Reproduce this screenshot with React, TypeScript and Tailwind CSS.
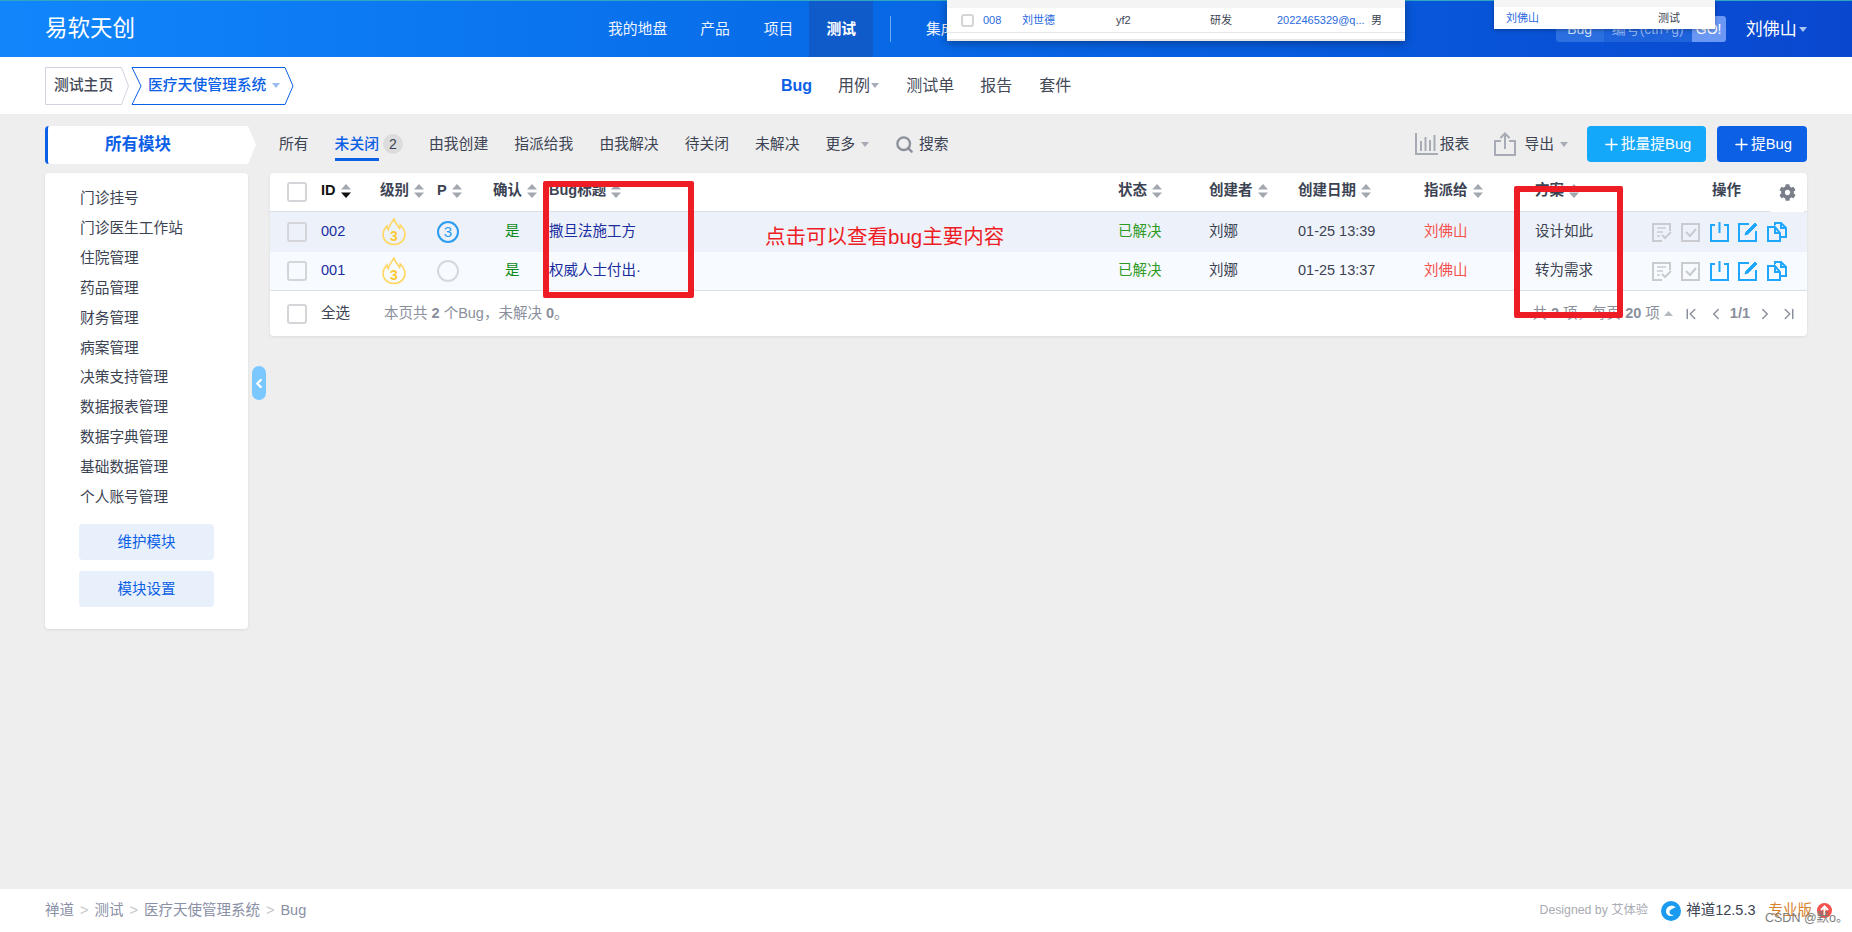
import React from 'react';
import { ChevronFirst, ChevronLast, ChevronLeft, ChevronRight, Plus, Search } from 'lucide-react';
import { FaCog } from 'react-icons/fa';

const cols = 'grid grid-cols-[51px_59px_57px_56px_56px_569px_91px_89px_126px_111px_117px_155px] items-center';

const Caret = ({ className = 'fill-[#a6abb5]' }: { className?: string }) => (
  <svg width="8" height="5" viewBox="0 0 8 5" className={`ml-[6px] inline-block ${className}`}><path d="M0 0h8L4 5z" /></svg>
);

const Sort = ({ active }: { active?: boolean }) => (
  <svg width="10" height="14" viewBox="0 0 10 14" className="ml-[5px] shrink-0">
    <path d="M5 0l5 5.5H0z" fill="#a3a7b0" />
    <path d="M5 14L0 8.5h10z" fill={active ? '#111' : '#a3a7b0'} />
  </svg>
);

const Check = ({ size = 'w-[20px] h-[20px]' }: { size?: string }) => (
  <span className={`block ${size} border-2 border-[#d3d5d8] rounded-[3px] bg-transparent`} />
);

const Flame = () => (
  <svg width="24" height="28" viewBox="0 0 24 28">
    <path d="M12 1C12.800 5.500 16 7 17.600 10.500c.6-1 .8-2 .7-3.500 2.500 2.500 4.700 6 4.700 9.500 0 5.800-4.800 10-11 10S1 22.300 1 16.500c0-3.500 2-6.500 4-8.500 0 1.500.3 2.700 1.200 3.800C7 8 9.500 5 12 1z" fill="none" stroke="#ffd65c" strokeWidth="1.500" />
    <text x="12" y="23" textAnchor="middle" fontSize="14" fontWeight="700" fill="#fcc934" fontFamily="Liberation Sans">3</text>
  </svg>
);

const Actions = () => {
  const g = '#c9cbcf';
  const b = '#1ea7fd';
  return (
    <div className="flex items-center gap-[9px]">
      <svg width="20" height="20" viewBox="0 0 20 20" fill="none" stroke={g} strokeWidth="2"><path d="M18 9V2H1v17h9" /><path d="M5 6h9M5 10h6M5 14h3" strokeWidth="1.300" /><path d="M10 13l3 3 6-6" /></svg>
      <svg width="19" height="19" viewBox="0 0 19 19" fill="none" stroke={g} strokeWidth="2"><path d="M1 1h17v17H1z" /><path d="M5 9l4 4 6-7" /></svg>
      <svg width="19" height="20" viewBox="0 0 19 20" fill="none" stroke={b} strokeWidth="2" className="ml-[1px]"><path d="M5 3H1v16h17V3h-4" /><path d="M9.500 0v11" /></svg>
      <svg width="20" height="20" viewBox="0 0 20 20" fill="none" stroke={b} strokeWidth="2"><path d="M11 2H1v17h17V9" /><path d="M7 13l1-3 9-9 2 2-9 9z" fill={b} strokeWidth="1" /></svg>
      <svg width="20" height="20" viewBox="0 0 20 20" fill="none" stroke={b} strokeWidth="2"><path d="M8 5H1v14h12v-8L8 5v6h5" /><path d="M8 3V1h6l5 5v9h-5M14 1v5h5" /></svg>
    </div>
  );
};

const rows = [
  { id: '002', p: true, title: '撒旦法施工方', date: '01-25 13:39', plan: '设计如此', bg: 'bg-[#edf2fa]' },
  { id: '001', p: false, title: '权威人士付出·', date: '01-25 13:37', plan: '转为需求', bg: 'bg-[#f7fafe]' },
];

const heads: [string, string][] = [
  ['ID', ''], ['级别', ''], ['P', ''], ['确认', ''], ['Bug标题', ''],
];

const modules = ['门诊挂号', '门诊医生工作站', '住院管理', '药品管理', '财务管理', '病案管理', '决策支持管理', '数据报表管理', '数据字典管理', '基础数据管理', '个人账号管理'];

export default function App() {
  return (
    <div className="relative flex h-[932px] w-[1852px] flex-col overflow-hidden bg-[#eeeeee] font-['Liberation_Sans','Noto_Sans_CJK_SC',sans-serif] text-[14.5px] text-[#3c4353]">
      {/* Top bar */}
      <header className="flex h-[57px] shrink-0 items-center border-t border-t-[#2fa6c4] bg-gradient-to-r from-[#1186fb] to-[#0a47cf] pl-[45px] text-white">
        <div className="w-[546px] text-[22.5px] leading-none">易软天创</div>
        <nav className="flex h-full items-center text-[14.8px] text-[#eef4ff]">
          <span className="px-[17px]">我的地盘</span>
          <span className="px-[16px]">产品</span>
          <span className="pl-[18px] pr-[16px]">项目</span>
          <span className="flex h-full items-center bg-[#0f5bc9] pl-[17px] pr-[17px] font-bold text-white">测试</span>
          <span className="ml-[17px] h-[26px] w-px bg-[#6ea8f2]" />
          <span className="ml-[35px]">集成</span>
        </nav>
        <div className="ml-[600px] flex h-[26px] items-center text-[14px] text-[#cfe0fb]">
          <span className="flex h-full w-[48px] items-center justify-center rounded-l-[3px] bg-[#2b6fe0]">Bug</span>
          <span className="flex h-full w-[88px] items-center justify-center bg-[#1e62dc] text-[#8fb4f2]">编号(ctrl+g)</span>
          <span className="flex h-full w-[34px] items-center justify-center rounded-r-[3px] bg-[#6b98f5] text-white">GO!</span>
        </div>
        <span className="ml-[20px] text-[17px] leading-none">刘佛山</span>
        <Caret className="!ml-[2px] fill-[#a9c6f5]" />
      </header>

      {/* Second bar */}
      <div className="flex h-[57px] shrink-0 items-center bg-white pl-[45px]">
        <div className="relative flex h-[38px] w-[84px] items-center pl-[9px] font-medium text-[#444a58]">
          <svg width="84" height="38" viewBox="0 0 84 38" className="absolute left-0 top-0"><path d="M.5.5h76l7 18.500-7 18.500H.5z" fill="#fff" stroke="#d0d5e0" /></svg>
          <span className="relative text-[14.8px]">测试主页</span>
        </div>
        <div className="relative ml-[2px] flex h-[38px] w-[163px] items-center pl-[17px] font-medium text-[#0b60e6]">
          <svg width="163" height="38" viewBox="0 0 163 38" className="absolute left-0 top-0"><path d="M1 .5h153l8 18.500-8 18.500H1l9-18.500z" fill="#fff" stroke="#0b60e6" /></svg>
          <span className="relative text-[14.8px]">医疗天使管理系统</span>
          <Caret className="relative fill-[#9bbdf2]" />
        </div>
        <div className="ml-[487px] flex items-center text-[16px] text-[#444a58]">
          <span className="font-bold text-[#0b60e6]">Bug</span>
          <span className="ml-[26px]">用例</span><Caret className="fill-[#a6abb5] !ml-[1px]" />
          <span className="ml-[27px]">测试单</span>
          <span className="ml-[26px]">报告</span>
          <span className="ml-[27px]">套件</span>
        </div>
      </div>

      {/* Main */}
      <main className="relative flex-1 px-[45px] pt-[12px]">
        <div className="flex h-[38px] items-center text-[14.8px] text-[#3c4353]">
          <div className="flex h-full w-[211px] items-center justify-center rounded-l-[4px] border-l-[3px] border-l-[#0b60e6] bg-white pb-[2px] pr-[28px] text-[16.500px] font-semibold text-[#0b60e6] [clip-path:polygon(0_0,203px_0,211px_50%,203px_100%,0_100%)]">所有模块</div>
          <div className="ml-[23px] flex items-center gap-[26px] pb-[2px]">
            <span>所有</span>
            <span className="flex items-center">
              <span className="relative font-medium text-[#0b60e6]">未关闭<span className="absolute -bottom-[6px] left-0 right-0 h-[3px] bg-[#0b60e6]" /></span>
              <span className="ml-[4px] flex h-[20px] w-[20px] items-center justify-center rounded-full bg-[#dcdcdc] text-[14px]">2</span>
            </span>
            <span>由我创建</span>
            <span>指派给我</span>
            <span>由我解决</span>
            <span>待关闭</span>
            <span>未解决</span>
            <span className="flex items-center">更多<Caret /></span>
            <span className="flex items-center"><Search size={19} strokeWidth={3} className="mr-[5px] text-[#8b909b]" />搜索</span>
          </div>
          <div className="ml-auto flex items-center pb-[2px]">
            <svg width="23" height="22" viewBox="0 0 23 22" fill="none" stroke="#a6abb5" strokeWidth="2" className="mr-[2px]"><path d="M1 0v21h22" /><path d="M6 8v10M10.500 4v14M15 7v11M19.500 2v16" /></svg>
            <span>报表</span>
            <svg width="22" height="24" viewBox="0 0 22 24" fill="none" stroke="#a6abb5" strokeWidth="2" className="ml-[25px] mr-[8px]"><path d="M7 9H1v14h20V9h-6" /><path d="M11 17V2M6.500 6L11 1.500 15.500 6" /></svg>
            <span>导出</span><Caret />
            <button className="ml-[19px] flex h-[36px] w-[119px] items-center justify-center rounded-[4px] bg-[#14a8fb] text-white"><Plus size={19} />批量提Bug</button>
            <button className="ml-[11px] flex h-[36px] w-[90px] items-center justify-center rounded-[4px] bg-[#0b60e6] text-white"><Plus size={19} />提Bug</button>
          </div>
        </div>

        <div className="relative mt-[9px] flex items-start gap-[22px]">
          {/* Sidebar */}
          <aside className="w-[203px] rounded-[4px] bg-white pb-[22px] pl-[35px] pt-[11px] shadow-[0_1px_3px_rgba(0,0,0,0.08)]">
            <ul className="text-[14.700px] leading-[29.9px]">
              {modules.map((m) => <li key={m}>{m}</li>)}
            </ul>
            <button className="mt-[11px] block h-[36px] w-[135px] -translate-x-px rounded-[4px] bg-[#e7f0fb] pt-[2px] text-[#0b60e6]">维护模块</button>
            <button className="mt-[11px] block h-[36px] w-[135px] -translate-x-px rounded-[4px] bg-[#e7f0fb] pt-[2px] text-[#0b60e6]">模块设置</button>
          </aside>
          <button className="absolute left-[207px] top-[193px] flex h-[34px] w-[14px] items-center justify-center rounded-[7px] bg-[#7ac8ff] text-white"><ChevronLeft size={15} strokeWidth={4} /></button>

          {/* Table */}
          <section className="relative w-[1537px] rounded-[4px] bg-white shadow-[0_1px_3px_rgba(0,0,0,0.08)]">
            <div className={`${cols} h-[39px] border-b border-[#dcdfe4] pb-[2px] font-bold`}>
              <div className="pl-[17px] pt-[2px]"><Check /></div>
              {heads.map(([h], i) => (
                <div key={h} className={`flex items-center ${i === 0 ? 'text-[#111]' : ''}`}>{h}<Sort active={i === 0} /></div>
              ))}
              <div className="flex items-center">状态<Sort /></div>
              <div className="flex items-center">创建者<Sort /></div>
              <div className="flex items-center">创建日期<Sort /></div>
              <div className="flex items-center">指派给<Sort /></div>
              <div className="flex items-center">方案<Sort /></div>
              <div className="pl-[60px]">操作</div>
            </div>
            <span className="absolute right-[3px] top-0 flex h-[39px] w-[34px] items-center justify-center rounded-tr-[4px] bg-white text-[#797e88]"><FaCog size={17} /></span>
            {rows.map((r, i) => (
              <div key={r.id} className={`${cols} ${i === 0 ? 'h-[40px]' : 'h-[39px] border-b border-[#dcdfe4]'} ${r.bg}`}>
                <div className="pl-[17px]"><Check /></div>
                <div className="text-[#1a2da0]">{r.id}</div>
                <div className="pl-[2px]"><Flame /></div>
                <div>
                  {r.p
                    ? <span className="flex h-[22px] w-[22px] items-center justify-center rounded-full border-2 border-[#2b9cf0] text-[15px] text-[#2b9cf0]">3</span>
                    : <span className="block h-[22px] w-[22px] rounded-full border-2 border-[#d5d8de]" />}
                </div>
                <div className="pl-[12px] text-[#0a8a1a]">是</div>
                <div className="text-[#1a2da0]">{r.title}</div>
                <div className="text-[#2e9a1f]">已解决</div>
                <div>刘娜</div>
                <div>{r.date}</div>
                <div className="text-[#f4504c]">刘佛山</div>
                <div>{r.plan}</div>
                <Actions />
              </div>
            ))}
            <div className="flex h-[45px] items-center text-[14.500px]">
              <div className="w-[51px] pl-[17px]"><Check /></div>
              <span>全选</span>
              <span className="ml-[34px] text-[#8a8f9c]">本页共 <b>2</b> 个Bug，未解决 <b>0</b>。</span>
              <div className="ml-auto flex items-center pr-[9px] text-[#8a8f9c]">
                <span>共 <b>2</b> 项，每页 <b>20</b> 项</span>
                <svg width="9" height="5" viewBox="0 0 9 5" className="ml-[4px]"><path d="M0 5h9L4.500 0z" fill="#b5b9c1" /></svg>
                <ChevronFirst size={18} className="ml-[9px]" />
                <ChevronLeft size={18} className="ml-[7px]" />
                <b className="ml-[5px]">1/1</b>
                <ChevronRight size={18} className="ml-[6px]" />
                <ChevronLast size={18} className="ml-[6px]" />
              </div>
            </div>
          </section>
        </div>
      </main>

      {/* Footer */}
      <footer className="flex h-[43px] shrink-0 items-center bg-white pl-[45px] pr-[20px] text-[14.500px] text-[#8a90a6]">
        <span>禅道</span><span className="mx-[6px] text-[#c8c8c8]">&gt;</span>
        <span>测试</span><span className="mx-[6px] text-[#c8c8c8]">&gt;</span>
        <span>医疗天使管理系统</span><span className="mx-[6px] text-[#c8c8c8]">&gt;</span>
        <span>Bug</span>
        <div className="ml-auto flex items-center">
          <span className="text-[12.300px] text-[#a9abb3]">Designed by 艾体验</span>
          <svg width="20" height="20" viewBox="0 0 20 20" className="ml-[13px]">
            <circle cx="10" cy="10" r="10" fill="#1a9bf0" />
            <path d="M15 6.500C12 3.500 5.500 4.500 5 10c-.3 4 4.500 6.500 8 4-3 .5-5-1.500-4.500-3.500.5-2 4-3 6.500-4.500z" fill="#fff" />
            <circle cx="12" cy="11" r="2" fill="#1a9bf0" />
          </svg>
          <span className="ml-[5px] text-[#3c4353]">禅道12.5.3</span>
          <span className="ml-[13px] text-[#d9822b]">专业版</span>
          <svg width="15" height="15" viewBox="0 0 15 15" className="ml-[5px]">
            <circle cx="7.500" cy="7.500" r="7.500" fill="#f4504c" />
            <path d="M7.500 12V4M4 7l3.500-3.500L11 7" fill="none" stroke="#fff" strokeWidth="2" />
          </svg>
        </div>
      </footer>
      <span className="absolute left-[1765px] top-[909px] text-[12.500px] text-[#7c7c7c]">CSDN @默o。</span>

      {/* Pasted screenshot fragments */}
      <div className="absolute left-[947px] top-0 h-[41px] w-[458px] border-b-2 border-[#e8e8e8] bg-white text-[11px] shadow-[0_2px_8px_rgba(0,0,0,0.35)]">
        <div className="h-[8px] bg-[#f4f4f4]" />
        <div className="flex h-[25px] items-center border-b border-[#e6e6e6] pt-[1px]">
          <span className="ml-[14px] w-[22px]"><Check size="w-[13px] h-[13px]" /></span>
          <span className="w-[39px] text-[#2a6ae0]">008</span>
          <span className="w-[94px] text-[#2a6ae0]">刘世德</span>
          <span className="w-[94px]">yf2</span>
          <span className="w-[67px]">研发</span>
          <span className="w-[94px] text-[#2a6ae0]">2022465329@q...</span>
          <span>男</span>
        </div>
      </div>
      <div className="absolute left-[1494px] top-0 h-[29px] w-[221px] bg-white text-[11px] shadow-[0_1px_4px_rgba(0,0,0,0.3)]">
        <div className="h-[7px] bg-[#f5f5f5]" />
        <div className="flex h-[22px] items-center pl-[12px]">
          <span className="w-[152px] text-[#2a6ae0]">刘佛山</span><span>测试</span>
        </div>
      </div>

      {/* Annotations */}
      <div className="absolute left-[543px] top-[181px] h-[117px] w-[151px] rounded-[2px] border-[6px] border-[#ee1c25]" />
      <div className="absolute left-[1514px] top-[186px] h-[132px] w-[109px] rounded-[2px] border-[6px] border-[#ee1c25]" />
      <span className="absolute left-[765px] top-[223px] text-[20.500px] leading-[28px] text-[#ee1c25]">点击可以查看bug主要内容</span>
    </div>
  );
}
